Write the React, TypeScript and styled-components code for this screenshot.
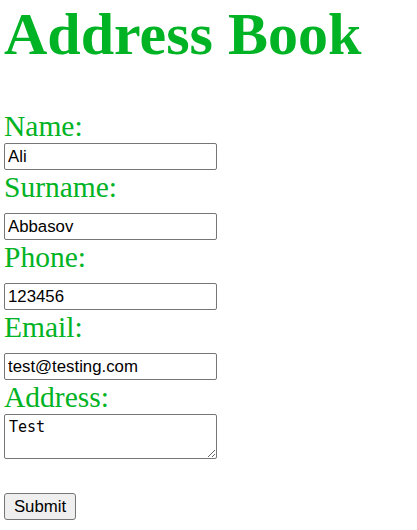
import React from "react";
import styled, { createGlobalStyle } from "styled-components";

const Global = createGlobalStyle`
  html, body { margin: 0; padding: 0; background: #fff; }
  body { font-family: "Liberation Serif", "Times New Roman", serif; }
`;

const Page = styled.div`
  padding: 0 4px;
`;

const Title = styled.h1`
  margin: 0 0 40px;
  font-family: "Liberation Serif", "Times New Roman", serif;
  font-weight: bold;
  font-size: 60px;
  line-height: 69px;
  color: #00b324;
`;

const Form = styled.form`
  display: flex;
  flex-direction: column;
  align-items: flex-start;
`;

const Label = styled.label`
  display: block;
  font-family: "Liberation Serif", "Times New Roman", serif;
  font-size: 29.5px;
  line-height: 34px;
  color: #00b324;
`;

const Input = styled.input<{ $gap: number }>`
  box-sizing: border-box;
  width: 213px;
  height: 27px;
  margin: ${(p) => p.$gap}px 0 0;
  padding: 1px 3px;
  border: 1px solid #767676;
  border-radius: 2px;
  font-family: "Liberation Sans", Arial, sans-serif;
  font-size: 16.8px;
  color: #000;
  background: #fff;
`;

const TextArea = styled.textarea`
  box-sizing: border-box;
  width: 213px;
  height: 45px;
  margin: 0;
  padding: 3px 4px;
  border: 1px solid #767676;
  border-radius: 2px;
  font-family: "DejaVu Sans Mono", monospace;
  font-size: 15px;
  line-height: 18px;
  color: #000;
  background: #fff;
`;

const Button = styled.button`
  box-sizing: border-box;
  margin-top: 34px;
  width: 72px;
  height: 27px;
  padding: 0;
  border: 1px solid #767676;
  border-radius: 3px;
  background: #efefef;
  font-family: "Liberation Sans", Arial, sans-serif;
  font-size: 16.8px;
  color: #000;
`;

const fields = [
  { label: "Name:", value: "Ali", gap: 0 },
  { label: "Surname:", value: "Abbasov", gap: 9 },
  { label: "Phone:", value: "123456", gap: 9 },
  { label: "Email:", value: "test@testing.com", gap: 9 },
];

export default function App() {
  return (
    <Page>
      <Global />
      <Title>Address Book</Title>
      <Form onSubmit={(e) => e.preventDefault()}>
        {fields.map((f) => (
          <React.Fragment key={f.label}>
            <Label>{f.label}</Label>
            <Input $gap={f.gap} type="text" defaultValue={f.value} />
          </React.Fragment>
        ))}
        <Label>Address:</Label>
        <TextArea defaultValue="Test" />
        <Button type="submit">Submit</Button>
      </Form>
    </Page>
  );
}
